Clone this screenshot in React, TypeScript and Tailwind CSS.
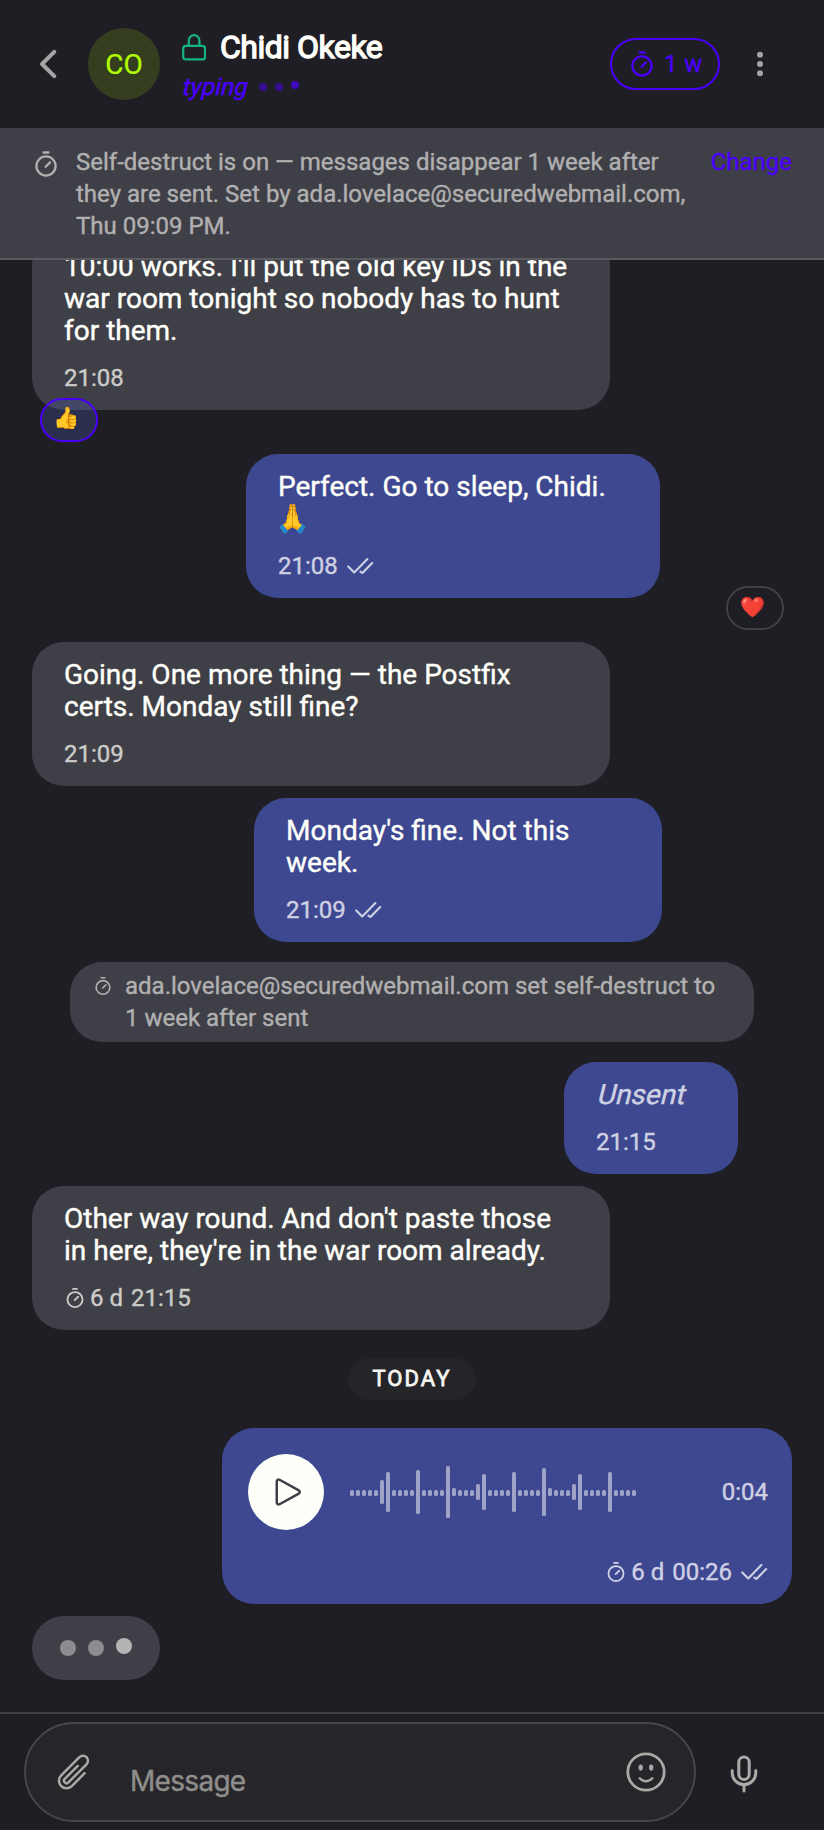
import type { ReactNode } from 'react';
import clsx from 'clsx';

const WAVE = [
    6, 6, 6, 6, 6, 24, 40, 6, 6, 6, 6, 44, 6, 6, 6, 6,
    52, 8, 6, 6, 6, 16, 36, 6, 6, 6, 6, 40, 6, 6, 6, 6,
    48, 8, 6, 6, 6, 16, 36, 6, 6, 6, 6, 40, 6, 6, 6, 6
];

function TimerIcon({ className }: { className?: string }) {
    return (
        <svg viewBox="0 0 28 28" fill="none" stroke="currentColor" strokeWidth="2.3" strokeLinecap="round" className={className}>
            <circle cx="14" cy="16" r="9.6" />
            <path d="M11.5 2.5h5M13.6 16.8l4.4-4.4" />
        </svg>
    );
}

function DoubleCheck() {
    return (
        <svg viewBox="0 0 28 20" fill="none" stroke="currentColor" strokeWidth="2.1" strokeLinecap="round" strokeLinejoin="round" className="ml-2 h-5 w-7">
            <path d="M2.2 10.4l6 6.2L21.4 3M14.4 15.6l2 1.4L26.2 7" />
        </svg>
    );
}

function Meta({ time, left, read, className }: { time: string; left?: string; read?: boolean; className?: string }) {
    return (
        <div className={clsx('flex h-8 items-center text-2xl/8', className)}>
            {left && <TimerIcon className="mr-1 h-[22px] w-[22px]" />}
            {left && <span className="mr-2">{left}</span>}
            <span>{time}</span>
            {read && <DoubleCheck />}
        </div>
    );
}

interface BubbleProps {
    children: ReactNode;
    className?: string;
    mine?: boolean;
}

function Bubble({ children, className, mine }: BubbleProps) {
    return (
        <div className={clsx('relative shrink-0 rounded-[32px] px-8 pt-[17px] pb-4', mine ? 'bg-[#3d4891]' : 'w-[578px] bg-[#3f3f47]', className)}>
            {children}
        </div>
    );
}

function Text({ children }: { children: ReactNode }) {
    return <p className="mb-[15px] text-[28px]/8 text-[#fffffa]">{children}</p>;
}

export default function App() {
    return (
        <div className="flex h-[1830px] w-[824px] flex-col overflow-hidden bg-[#1f1e24] font-['Roboto',sans-serif] [-webkit-text-stroke:0.4px]">
            {/* Header */}
            <header className="flex h-32 shrink-0 items-center pl-8 text-[#a6a5a4]">
                <svg viewBox="0 0 32 32" fill="none" stroke="currentColor" strokeWidth="4" strokeLinecap="round" strokeLinejoin="round" className="h-8 w-8">
                    <path d="M22.3 3.8L10 16l12.3 12.2" />
                </svg>
                <div className="ml-6 flex h-[72px] w-[72px] items-center justify-center rounded-full bg-[#353f20] pt-0.5 text-[28px] text-[#b2ff00] [-webkit-text-stroke:0.2px]">CO</div>
                <div className="ml-[22px] pt-[6px]">
                    <div className="flex h-10 items-center">
                        <svg viewBox="0 0 24 28" fill="none" stroke="#14b47f" strokeWidth="2.2" strokeLinejoin="round" className="h-7 w-6">
                            <rect x="1.2" y="12.8" width="21.8" height="13.6" rx="2.6" />
                            <path d="M6.8 12.6V7.4a5.3 5.3 0 0 1 10.6 0v5.2" />
                        </svg>
                        <h1 className="ml-3.5 text-[32px] tracking-[-0.5px] text-[#fffffa] [-webkit-text-stroke:1.3px]">Chidi Okeke</h1>
                    </div>
                    <div className="flex h-[41px] items-center text-[#4b00ff]">
                        <span className="-ml-px inline-block origin-[0_24px] -skew-x-[14deg] text-2xl">typing</span>
                        <span className="ml-[13px] flex gap-2">
                            <i className="h-2 w-2 rounded-full bg-current opacity-50" />
                            <i className="h-2 w-2 rounded-full bg-current opacity-50" />
                            <i className="h-2 w-2 -translate-y-0.5 rounded-full bg-current opacity-70" />
                        </span>
                    </div>
                </div>
                <button className="ml-auto flex h-[52px] w-[110px] items-center rounded-full border-2 border-[#4b00ff] pl-4 text-2xl text-[#4b00ff]">
                    <TimerIcon className="h-7 w-7" />
                    <span className="ml-2 tracking-[0.4px] [-webkit-text-stroke:0.3px]">1 w</span>
                </button>
                <svg viewBox="0 0 8 28" fill="currentColor" className="mr-[60px] ml-9 h-7 w-2">
                    <circle cx="4" cy="4.7" r="3" />
                    <circle cx="4" cy="14" r="3" />
                    <circle cx="4" cy="23.3" r="3" />
                </svg>
            </header>

            {/* Self-destruct banner */}
            <div className="flex h-[132px] shrink-0 items-start border-b-2 border-[#5b5a60] bg-[#3f3f47] pt-[18px] pr-8 pl-8 text-2xl/8 text-[#b1b0b0]">
                <TimerIcon className="mt-1 h-7 w-7" />
                <p className="ml-4 w-[620px]">
                    Self-destruct is on — messages disappear 1 week after they are sent. Set by ada.lovelace@securedwebmail.com, Thu 09:09 PM.
                </p>
                <button className="ml-auto text-[#4b00ff] [-webkit-text-stroke:0.3px]">Change</button>
            </div>

            {/* Conversation */}
            <main className="flex h-[1452px] shrink-0 flex-col items-start justify-end overflow-hidden px-8 pb-8 text-[#cbcbc8]">
                <Bubble className="mb-11">
                    <Text>10:00 works. I'll put the old key IDs in the war room tonight so nobody has to hunt for them.</Text>
                    <Meta time="21:08" />
                    <span className="absolute top-[164px] left-2 flex h-11 w-[58px] items-center rounded-full border-2 border-[#4b00ff] bg-[#5064c8]/25 pb-0.5 pl-[11px] text-[21px]">👍</span>
                </Bubble>
                <Bubble mine className="mb-11 ml-[214px] w-[414px] text-[#cfd1e3]">
                    <Text>Perfect. Go to sleep, Chidi. <span className="-ml-[3px]">🙏</span></Text>
                    <Meta time="21:08" read />
                    <span className="absolute top-[132px] left-[480px] flex h-11 w-[58px] items-center rounded-full border-2 border-[#424147] pb-0.5 pl-3 text-[20px]">❤️</span>
                </Bubble>
                <Bubble className="mb-3">
                    <Text>Going. One more thing — the Postfix certs. Monday still fine?</Text>
                    <Meta time="21:09" />
                </Bubble>
                <Bubble mine className="mb-5 ml-[222px] w-[408px] text-[#cfd1e3]">
                    <Text>Monday's fine. Not this week.</Text>
                    <Meta time="21:09" read />
                </Bubble>
                <div className="mb-5 ml-[38px] flex h-20 w-[684px] shrink-0 rounded-[32px] bg-[#3f3f47] py-2 pl-[23px] text-2xl/8 text-[#b1b0b0]">
                    <TimerIcon className="mt-[6px] h-5 w-5 shrink-0" />
                    <p className="ml-3 w-[600px]">ada.lovelace@securedwebmail.com set self-destruct to 1 week after sent</p>
                </div>
                <Bubble mine className="mb-3 ml-[532px] w-[174px] text-[#cfd1e3]">
                    <p className="mb-[15px] origin-[0_26px] -skew-x-[14deg] text-[28px]/8">Unsent</p>
                    <Meta time="21:15" />
                </Bubble>
                <Bubble className="mb-7">
                    <Text>Other way round. And don't paste those in here, they're in the war room already.</Text>
                    <Meta time="21:15" left="6 d" />
                </Bubble>
                <div className="mb-7 flex h-[42px] w-32 shrink-0 items-center justify-center self-center rounded-full bg-[#252429] pb-0.5 text-[22px] tracking-[2.1px] text-[#f5f5f0] [-webkit-text-stroke:0.8px]">
                    TODAY
                </div>

                {/* Voice message */}
                <div className="mb-3 flex h-44 w-[570px] shrink-0 flex-col self-end rounded-[32px] bg-[#3d4891] px-6 pt-[26px] text-[#cfd1e3]">
                    <div className="flex items-center">
                        <div className="ml-0.5 flex h-[76px] w-[76px] items-center justify-center rounded-full bg-[#fffffa] pl-1 text-[#3f3f47]">
                            <svg viewBox="0 0 24 24" fill="none" stroke="currentColor" strokeWidth="1.5" strokeLinejoin="round" className="h-10 w-10">
                                <path d="M5.25 5.653c0-.856.917-1.398 1.667-.986l11.54 6.347a1.125 1.125 0 0 1 0 1.972l-11.54 6.347a1.125 1.125 0 0 1-1.667-.986V5.653Z" />
                            </svg>
                        </div>
                        <svg viewBox="0 0 286 52" fill="#9fa3c8" className="ml-[26px] h-[52px] w-[286px]">
                            {WAVE.map((h, i) => (
                                <rect key={i} x={i * 6} y={h === 6 ? 24 : 26 - h / 2} width="4" height={h} rx="1.6" />
                            ))}
                        </svg>
                        <span className="ml-auto text-2xl">0:04</span>
                    </div>
                    <Meta time="00:26" left="6 d" read className="mt-[26px] self-end" />
                </div>

                <div className="flex h-16 w-32 shrink-0 items-center justify-center gap-3 rounded-full bg-[#3f3f47]">
                    <i className="h-4 w-4 rounded-full bg-[#8d8c8e]" />
                    <i className="h-4 w-4 rounded-full bg-[#8d8c8e]" />
                    <i className="h-4 w-4 -translate-y-0.5 rounded-full bg-[#b5b4b5]" />
                </div>
            </main>

            {/* Composer */}
            <footer className="flex h-[118px] shrink-0 border-t-2 border-[#424147] pt-2 pl-6 text-[#aaa9a6]">
                <div className="flex h-[100px] w-[672px] items-center rounded-[50px] border-2 border-[#47464b] bg-[#262529] pr-6 pl-7">
                    <svg viewBox="0 0 24 24" fill="none" stroke="currentColor" strokeWidth="1.5" strokeLinecap="round" strokeLinejoin="round" className="h-10 w-10">
                        <path d="m18.375 12.739-7.693 7.693a4.5 4.5 0 0 1-6.364-6.364l10.94-10.94A3 3 0 1 1 19.5 7.372L8.552 18.32m.009-.01-.01.01m5.699-9.941-7.81 7.81a1.5 1.5 0 0 0 2.112 2.13" />
                    </svg>
                    <span className="ml-9 pt-[17px] font-['Inter',sans-serif] text-[28px]/8 tracking-[-0.7px] text-[#8f8e8b]">Message</span>
                    <svg viewBox="0 0 48 48" fill="none" stroke="currentColor" strokeWidth="2.8" strokeLinecap="round" className="ml-auto h-12 w-12">
                        <circle cx="24" cy="24" r="18.2" />
                        <ellipse cx="18.7" cy="19.6" rx="2.2" ry="3.1" fill="currentColor" stroke="none" />
                        <ellipse cx="29.2" cy="19.6" rx="2.2" ry="3.1" fill="currentColor" stroke="none" />
                        <path d="M17.8 30.2c3.6 4 8.8 4 12.4 0" strokeWidth="2.4" />
                    </svg>
                </div>
                <svg viewBox="0 0 48 48" fill="none" stroke="currentColor" strokeWidth="3" strokeLinecap="round" className="mt-[28px] ml-6 h-12 w-12">
                    <rect x="18.8" y="7" width="10.4" height="22.4" rx="5.2" />
                    <path d="M12.2 20.4v2.4a11.8 11.8 0 0 0 23.6 0v-2.4M24 35v6" />
                </svg>
            </footer>
        </div>
    );
}
